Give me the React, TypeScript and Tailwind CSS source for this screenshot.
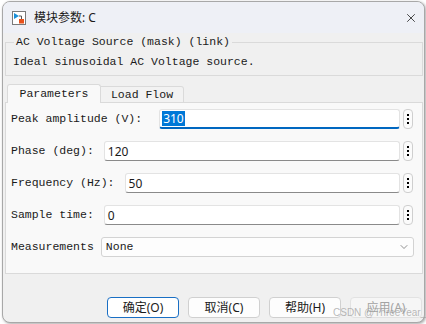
import { ChevronDown, X } from "lucide-react";

const mono = "font-['Liberation_Mono','DejaVu_Sans_Mono',monospace] text-[11.5px] text-[#1a1a1a]";
const cjk = "font-['Noto_Sans','Noto_Sans_CJK_SC',sans-serif]";

function BlockIcon() {
  return (
    <svg width="14" height="14" viewBox="0 0 14 14">
      <rect x="0.5" y="0.5" width="13" height="13" fill="#ffffff" stroke="#7a7a7a" />
      <polygon points="2,2 2,8 7,5" fill="#1a8fd8" />
      <path d="M7 5 H9.5 V8" stroke="#555" fill="none" />
      <rect x="7" y="8" width="5" height="4.5" fill="#e8521c" />
    </svg>
  );
}

function DotsButton() {
  return (
    <div className="ml-[3px] w-[10px] h-[20px] shrink-0 rounded-[4px] border border-[#cfcfcf] bg-[#fbfbfb] flex flex-col items-center justify-center gap-[2px]">
      <div className="w-[2px] h-[2px] bg-black" />
      <div className="w-[2px] h-[2px] bg-black" />
      <div className="w-[2px] h-[2px] bg-black" />
    </div>
  );
}

function ParamRow({
  label,
  value,
  gap,
  focused,
}: {
  label: string;
  value: string;
  gap: string;
  focused?: boolean;
}) {
  return (
    <div className="flex items-center h-[20px]">
      <span className={`${mono} whitespace-nowrap`}>{label}</span>
      <div
        className={`${gap} flex-1 h-[20px] bg-white rounded-[3px] border border-[#e3e3e3] flex items-center px-[2px] ${
          focused ? "border-b-2 border-b-[#0067c0]" : "border-b-[#8a8a8a]"
        }`}
      >
        {focused ? (
          <span className={`${cjk} text-[12px] leading-[15px] bg-[#0078d7] text-white px-[1px]`}>{value}</span>
        ) : (
          <span className={`${cjk} text-[12px] leading-[15px] text-[#1a1a1a] px-[1px]`}>{value}</span>
        )}
      </div>
      <DotsButton />
    </div>
  );
}

function DialogButton({ label, primary, disabled }: { label: string; primary?: boolean; disabled?: boolean }) {
  return (
    <div
      className={`w-[72px] h-[21px] rounded-[4px] flex items-center justify-center ${cjk} text-[12px] ${
        primary
          ? "border border-[#1a6fc4] bg-white text-[#1a1a1a]"
          : disabled
            ? "border border-[#e2e2e2] bg-[#f6f6f6] text-[#a3a3a3]"
            : "border border-[#d0d0d0] bg-[#fdfdfd] text-[#1a1a1a]"
      }`}
    >
      {label}
    </div>
  );
}

export default function App() {
  return (
    <div className="w-[426px] h-[324px] bg-white relative overflow-hidden">
      <div className="ml-[2px] mt-[1px] w-[423px] h-[322px] rounded-[8px] border border-[#a8a8a8] bg-[#f0f0f0] overflow-hidden flex flex-col shadow-[1px_1px_3px_rgba(0,0,0,0.35)]">
        {/* title bar */}
        <div className="h-[31px] shrink-0 bg-[#eef0f6] flex items-center pl-[9px] pr-[6px]">
          <BlockIcon />
          <span className={`ml-[8px] ${cjk} text-[12px] text-[#1a1a1a]`}>模块参数: C</span>
          <X className="ml-auto text-[#222]" size={14} strokeWidth={1.4} />
        </div>

        <div className="flex-1 flex flex-col pl-[2px] pr-[1px]">
          {/* description group */}
          <fieldset className="mt-[1px] border border-[#dadada] px-[8px] pb-[5px]">
            <legend className={`${mono} px-[2px] leading-[16px]`}>AC Voltage Source (mask) (link)</legend>
            <div className={`${mono} mt-[4px] leading-[16px] -ml-[1px]`}>Ideal sinusoidal AC Voltage source.</div>
          </fieldset>

          {/* tabs */}
          <div className="mt-[8px] ml-[2px] flex items-end h-[19px] -mb-px relative z-10">
            <div className={`w-[94px] h-[19px] bg-[#f9f9f9] border border-[#dadada] border-b-0 rounded-t-[3px] flex items-center justify-center ${mono}`}>
              Parameters
            </div>
            <div className={`w-[83px] h-[17px] bg-[#f2f2f2] border border-[#dadada] border-l-0 rounded-tr-[3px] flex items-center justify-center ${mono}`}>
              Load Flow
            </div>
          </div>

          {/* panel */}
          <div className="h-[172px] border border-[#dadada] bg-[#f9f9f9] pl-[5px] pr-[9px] pt-[6px] flex flex-col gap-[12px]">
            <ParamRow label="Peak amplitude (V):" value="310" gap="ml-[17px]" focused />
            <ParamRow label="Phase (deg):" value="120" gap="ml-[10px]" />
            <ParamRow label="Frequency (Hz):" value="50" gap="ml-[10px]" />
            <ParamRow label="Sample time:" value="0" gap="ml-[10px]" />
            <div className="flex items-center h-[20px] -mr-[1px]">
              <span className={`${mono} whitespace-nowrap`}>Measurements</span>
              <div className="ml-[7px] flex-1 h-[20px] rounded-[3px] border border-[#d3d3d3] bg-[#fdfdfd] flex items-center pl-[4px] pr-[3px]">
                <span className={`${mono}`}>None</span>
                <ChevronDown className="ml-auto text-[#555]" size={12} strokeWidth={1.3} />
              </div>
            </div>
          </div>

          {/* buttons */}
          <div className="mt-[23px] flex justify-end gap-[9px] pr-[1px]">
            <DialogButton label="确定(O)" primary />
            <DialogButton label="取消(C)" />
            <DialogButton label="帮助(H)" />
            <DialogButton label="应用(A)" disabled />
          </div>
        </div>
      </div>

      <span className="absolute left-[333px] top-[305px] font-['Liberation_Sans',sans-serif] text-[10px] text-[#9a9a9a]/70 whitespace-nowrap">
        CSDN @ThreeYear_s
      </span>
    </div>
  );
}
